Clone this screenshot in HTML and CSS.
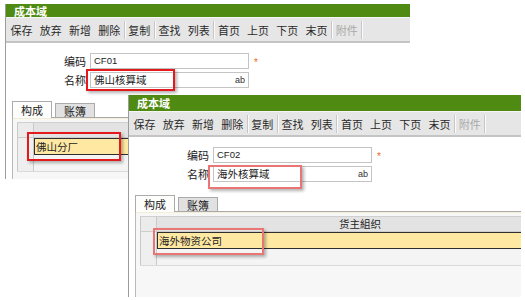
FILE: index.html
```html
<!DOCTYPE html>
<html lang="zh-CN">
<head>
<meta charset="utf-8">
<title>成本域</title>
<link rel="stylesheet" href="styles.css">
</head>
<body>
<div class="win win1">
  <div class="title">成本域</div>
  <div class="toolbar">
    <span class="btn">保存</span><span class="btn">放弃</span><span class="btn">新增</span><span class="btn">删除</span><span class="sep"></span>
    <span class="btn">复制</span><span class="sep"></span>
    <span class="btn">查找</span><span class="btn">列表</span><span class="sep"></span>
    <span class="btn">首页</span><span class="btn">上页</span><span class="btn">下页</span><span class="btn">末页</span><span class="sep"></span>
    <span class="btn dis">附件</span><span class="sep"></span>
  </div>
  <div class="form">
    <div class="frow"><span class="lbl">编码</span><div class="inp"><span class="val lat">CF01</span></div><span class="req">*</span></div>
    <div class="frow"><span class="lbl">名称</span><div class="inp"><span class="val">佛山核算域</span><span class="ab">ab</span></div></div>
  </div>
  <div class="tabs"><span class="tab on">构成</span><span class="tab">账簿</span></div>
  <div class="panel">
    <div class="grid">
      <div class="gh"><div class="rh"></div><div class="hc"></div></div>
      <div class="gr sel"><div class="rh"></div><div class="cell">佛山分厂</div></div>
      <div class="gr plain"><div class="rh"></div><div class="cell"></div></div>
    </div>
  </div>
</div>

<div class="win win2">
  <div class="title">成本域</div>
  <div class="toolbar">
    <span class="btn">保存</span><span class="btn">放弃</span><span class="btn">新增</span><span class="btn">删除</span><span class="sep"></span>
    <span class="btn">复制</span><span class="sep"></span>
    <span class="btn">查找</span><span class="btn">列表</span><span class="sep"></span>
    <span class="btn">首页</span><span class="btn">上页</span><span class="btn">下页</span><span class="btn">末页</span><span class="sep"></span>
    <span class="btn dis">附件</span><span class="sep"></span>
  </div>
  <div class="form">
    <div class="frow"><span class="lbl">编码</span><div class="inp"><span class="val lat">CF02</span></div><span class="req">*</span></div>
    <div class="frow"><span class="lbl">名称</span><div class="inp"><span class="val">海外核算域</span><span class="ab">ab</span></div></div>
  </div>
  <div class="tabs"><span class="tab on">构成</span><span class="tab">账簿</span></div>
  <div class="panel">
    <div class="grid">
      <div class="gh"><div class="rh"></div><div class="hc">货主組织</div></div>
      <div class="gr sel"><div class="rh"></div><div class="cell">海外物资公司</div></div>
      <div class="gr plain"><div class="rh"></div><div class="cell"></div></div>
    </div>
  </div>
</div>

<div class="mark m1"></div>
<div class="mark m2"></div>
<div class="mark soft m3"></div>
<div class="mark soft m4"></div>
</body>
</html>
```

FILE: styles.css
```css
* { box-sizing: border-box; }
html, body { margin: 0; padding: 0; }
body {
  width: 525px;
  height: 300px;
  position: relative;
  overflow: hidden;
  background: #fff;
  font-family: "Noto Sans CJK SC", "Noto Sans", sans-serif;
  color: #222;
}
.win {
  position: absolute;
  background: #fff;
  border-left: 1px solid #9c9c9c;
  overflow: hidden;
  display: flex;
  flex-direction: column;
}
.win1 { left: 5px; top: 4px; width: 405px; height: 175px; }
.win2 { left: 128px; top: 95px; width: 393px; height: 202px; }

.title {
  background: #4f8b12;
  color: #fff;
  font-weight: bold;
  font-size: 11px;
  padding-left: 8px;
  display: flex;
  align-items: center;
  flex: none;
}
.win1 .title { height: 13px; }
.win2 .title { height: 16px; }

.toolbar {
  flex: none;
  height: 26px;
  background: #e6e6e6;
  border-top: 1px solid #f6f6f6;
  border-bottom: 2px solid #c4c4c4;
  display: flex;
  align-items: center;
  padding-left: 1px;
  font-size: 11px;
  color: #2a2a2a;
}
.btn { padding: 0 3.6px; line-height: 16px; white-space: nowrap; }
.btn.dis { color: #a9a9a9; }
.sep { width: 1px; height: 18px; background: #c6c6c6; box-shadow: 1px 0 0 #fbfbfb; flex: none; }

.form {
  flex: none;
  padding-top: 10px;
  padding-left: 58px;
  display: flex;
  flex-direction: column;
  gap: 3px;
}
.frow { display: flex; align-items: center; height: 16px; }
.lbl { width: 26px; font-size: 11px; line-height: 16px; }
.inp {
  width: 159px;
  height: 16px;
  border: 1px solid #c4c4c4;
  background: #fff;
  display: flex;
  align-items: center;
  justify-content: space-between;
  padding: 0 3px 0 3px;
}
.val { font-size: 10.5px; line-height: 14px; }
.val.lat { font-family: "Liberation Sans", sans-serif; font-size: 9.5px; }
.ab { font-family: "Liberation Sans", sans-serif; font-size: 9px; color: #333; }
.req {
  margin-left: 5px;
  color: #f06a22;
  font-size: 10px;
  line-height: 10px;
  padding-top: 4px;
  font-family: "Liberation Sans", sans-serif;
}

.tabs {
  flex: none;
  display: flex;
  align-items: flex-end;
  gap: 3px;
  margin-top: 13px;
  padding-left: 6px;
  height: 16px;
}
.tab {
  height: 14px;
  padding: 0 8px;
  font-size: 11px;
  border: 1px solid #ababab;
  border-bottom: none;
  background: #e1e1e1;
  display: flex;
  align-items: center;
}
.tab.on {
  height: 17px;
  background: #fdfdfb;
  position: relative;
  z-index: 1;
  margin-bottom: -1px;
}

.panel {
  flex: 1;
  margin-left: 6px;
  border-top: 1px solid #a9a9a9;
  border-left: 1px solid #b9b9b9;
  background: #f7f7f7;
  box-shadow: inset 0 1px 0 #f3eedb, inset 0 2px 0 #f9f7ef;
  padding: 4px 0 4px 4px;
}
.grid { margin-right: -30px; border-top: 1px solid #cfcfcf; }
.gh { display: flex; height: 15px; background: #e3e3e3; border-bottom: 1px solid #cdcdcd; }
.rh {
  flex: none;
  width: 17px;
  border-left: 1px solid #c9c9c9;
  border-right: 1px solid #c9c9c9;
  background: #ebebeb;
}
.hc { flex: 1; text-align: center; padding-left: 12px; font-size: 10.5px; line-height: 14px; }
.gr { display: flex; height: 17px; }
.gr .rh { background: #efefef; }
.cell { flex: 1; font-size: 10.5px; line-height: 15px; padding-left: 1px; }
.gr.sel .cell { background: #ffe8a2; border: 1px solid #2e2e2e; }
.gr.plain { border-bottom: 1px solid #dadada; background: #f4f4f4; }

.mark {
  position: absolute;
  border: 2px solid #e3191b;
  box-shadow: 2px 2px 3px rgba(0, 0, 0, 0.3);
}
.mark.soft { border-color: #e97575; }
.m1 { left: 86px; top: 69px; width: 89px; height: 22px; }
.m2 { left: 27px; top: 132px; width: 94px; height: 29px; }
.m3 { left: 208px; top: 165px; width: 94px; height: 24px; }
.m4 { left: 153px; top: 228px; width: 111px; height: 27px; }
```
